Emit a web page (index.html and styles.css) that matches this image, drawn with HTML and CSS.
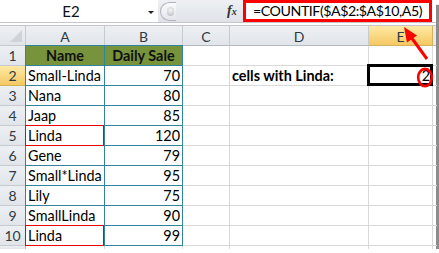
FILE: index.html
```html
<!DOCTYPE html>
<html>
<head>
<meta charset="utf-8">
<link rel="stylesheet" href="styles.css">
</head>
<body>
<div class="app">
  <div class="fbar">
    <div class="namebox"><span class="ref">E2</span><span class="dd"></span></div>
    <div class="mid"><span class="knob"><span class="dot"></span></span><span class="fx">f<span class="x">x</span></span></div>
    <div class="formula">=COUNTIF($A$2:$A$10,A5)</div>
    <div class="tail"></div>
  </div>
  <div class="sep"></div>
  <div class="sheet">
    <div class="hd corner"><span class="tri"></span></div>
    <div class="hd col">A</div>
    <div class="hd col">B</div>
    <div class="hd col">C</div>
    <div class="hd col">D</div>
    <div class="hd col sel">E</div>
    <div class="hd col last"></div>

    <div class="hd row">1</div>
    <div class="c ta tb top first th">Name</div>
    <div class="c tb top th">Daily Sale</div>
    <div class="c"></div><div class="c"></div><div class="c"></div><div class="c last"></div>

    <div class="hd row sel">2</div>
    <div class="c ta tb first">Small-Linda</div>
    <div class="c tb num">70</div>
    <div class="c"></div><div class="c lbl">cells with Linda:</div><div class="c num active">2</div><div class="c last"></div>

    <div class="hd row">3</div>
    <div class="c ta tb first">Nana</div>
    <div class="c tb num">80</div>
    <div class="c"></div><div class="c"></div><div class="c"></div><div class="c last"></div>

    <div class="hd row">4</div>
    <div class="c ta tb first">Jaap</div>
    <div class="c tb num">85</div>
    <div class="c"></div><div class="c"></div><div class="c"></div><div class="c last"></div>

    <div class="hd row">5</div>
    <div class="c ta tb first red">Linda</div>
    <div class="c tb num">120</div>
    <div class="c"></div><div class="c"></div><div class="c"></div><div class="c last"></div>

    <div class="hd row">6</div>
    <div class="c ta tb first">Gene</div>
    <div class="c tb num">79</div>
    <div class="c"></div><div class="c"></div><div class="c"></div><div class="c last"></div>

    <div class="hd row">7</div>
    <div class="c ta tb first">Small*Linda</div>
    <div class="c tb num">95</div>
    <div class="c"></div><div class="c"></div><div class="c"></div><div class="c last"></div>

    <div class="hd row">8</div>
    <div class="c ta tb first">Lily</div>
    <div class="c tb num">75</div>
    <div class="c"></div><div class="c"></div><div class="c"></div><div class="c last"></div>

    <div class="hd row">9</div>
    <div class="c ta tb first">SmallLinda</div>
    <div class="c tb num">90</div>
    <div class="c"></div><div class="c"></div><div class="c"></div><div class="c last"></div>

    <div class="hd row">10</div>
    <div class="c ta tb first red">Linda</div>
    <div class="c tb num">99</div>
    <div class="c"></div><div class="c"></div><div class="c"></div><div class="c last"></div>

    <div class="hd row stub"></div>
    <div class="c stub"></div><div class="c stub"></div><div class="c stub"></div><div class="c stub"></div><div class="c stub"></div><div class="c stub last"></div>
  </div>
  <svg class="annot" width="439" height="253" viewBox="0 0 439 253">
    <ellipse cx="425" cy="77.5" rx="6.8" ry="8.6" fill="none" stroke="#ff0000" stroke-width="2.6"/>
    <line x1="427" y1="59" x2="411" y2="37" stroke="#ff0000" stroke-width="3"/>
    <polygon points="404,27 417,35.5 407,42.5" fill="#ff0000"/>
  </svg>
</div>
</body>
</html>
```

FILE: styles.css
```css
* { box-sizing: border-box; }
html, body { margin: 0; padding: 0; background: #ffffff; }
body { font-family: Lato, "Open Sans", "Liberation Sans", sans-serif; }

.app {
  position: relative;
  width: 436px;
  height: 249px;
  background: #ffffff;
  box-shadow: 4px 4px 1px -1px #8c8c8c;
}

.fbar {
  display: flex;
  height: 23px;
  border-bottom: 1px solid #c3c7cd;
}
.namebox {
  width: 158px;
  display: flex;
  align-items: center;
  position: relative;
  background: #fff;
}
.ref {
  width: 142px;
  text-align: center;
  font-size: 15px;
  color: #111;
}
.dd {
  width: 0; height: 0;
  margin-left: 6px;
  margin-top: 2px;
  border-left: 3px solid transparent;
  border-right: 3px solid transparent;
  border-top: 3px solid #222;
}
.mid {
  width: 85px;
  display: flex;
  align-items: center;
  background: linear-gradient(#eef0f3, #dfe3e8);
}
.knob {
  width: 16px;
  height: 19px;
  margin-left: 2px;
  border: 1px solid #aeb4bd;
  border-right: none;
  border-radius: 10px 0 0 10px;
  background: linear-gradient(#fafbfc, #e3e6ea);
  display: flex;
  align-items: center;
  justify-content: center;
}
.dot {
  width: 7px; height: 9px;
  margin-left: 3px;
  border-radius: 4px;
  background: radial-gradient(circle at 50% 35%, #f6f6f6, #b5b9bf);
}
.fx {
  margin-left: 51px;
  font-family: "Liberation Serif", serif;
  font-style: italic;
  font-weight: bold;
  font-size: 14px;
  color: #333;
  line-height: 1;
}
.fx .x { font-size: 10px; }
.formula {
  width: 189px;
  height: 22px;
  border: 3px solid #ff0000;
  padding-left: 7px;
  font-size: 14.2px;
  letter-spacing: -0.45px;
  line-height: 16px;
  color: #000;
  white-space: nowrap;
  overflow: hidden;
  background: #fff;
}
.tail { flex: 1; background: #fff; }

.sep {
  height: 3px;
  border-bottom: 1px solid #c3c7cd;
}

.sheet {
  display: grid;
  grid-template-columns: 26px 79px 78px 47px 139px 64px 3px;
  grid-template-rows: repeat(11, 20px) 3px;
}

.hd {
  background: linear-gradient(#edf0f3, #e1e5ea);
  border-right: 1px solid #c6cbd2;
  border-bottom: 1px solid #c6cbd2;
  font-size: 14px;
  color: #2f3a45;
  display: flex;
  align-items: center;
  justify-content: center;
}
.hd.col { padding-top: 1px; border-bottom-color: #b4bac2; }
.hd.col.last { border-right: none; background: #e6e9ed; }
.hd.sel { background: linear-gradient(#fdeaa6, #f5c862); border-color: #d4b25a; }
.hd.row { border-right-color: #b4bac2; }
.hd.stub { border-bottom: none; }
.corner { position: relative; }
.tri {
  position: absolute;
  right: 3px; bottom: 3px;
  width: 0; height: 0;
  border-left: 12px solid transparent;
  border-bottom: 12px solid #cfd3d8;
}

.c {
  border-right: 1px solid #d9d9d9;
  border-bottom: 1px solid #d9d9d9;
  font-size: 14.4px;
  color: #000;
  line-height: 20px;
  padding: 0 2px;
  white-space: nowrap;
  position: relative;
}
.c.last { border-right: none; }
.c.stub { border-bottom: none; }
.c.tb { border-right-color: #31849b; border-bottom-color: #31849b; }
.c.first { box-shadow: -1px 0 0 #31849b; }
.c.top { box-shadow: 0 -1px 0 #31849b; }
.c.first.top { box-shadow: -1px 0 0 #31849b, 0 -1px 0 #31849b, -1px -1px 0 #31849b; }
.c.th {
  background: #77933c;
  font-weight: bold;
  text-align: center;
  color: #111;
}
.c.num { text-align: right; }
.c.lbl { font-weight: bold; padding-left: 2px; }
.c.red::after {
  content: "";
  position: absolute;
  left: -1px; top: -1px; right: 0; bottom: -1px;
  border: 1px solid #ee0000;
}
.c.active::after {
  content: "";
  position: absolute;
  left: -2px; top: -2px; right: -1px; bottom: -1px;
  border: 3px solid #000;
}

.annot {
  position: absolute;
  left: 0; top: 0;
  pointer-events: none;
}
```
